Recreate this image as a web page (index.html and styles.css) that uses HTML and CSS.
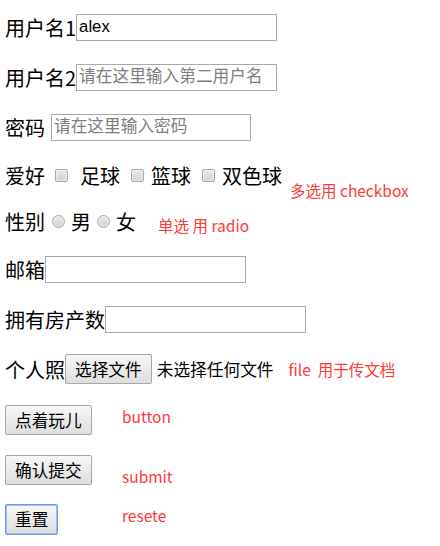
FILE: index.html
```html
<!DOCTYPE html>
<html lang="zh-CN">
<head>
  <meta charset="UTF-8">
  <title>表单</title>
  <link rel="stylesheet" href="styles.css">
</head>
<body>
  <form class="form">
    <div class="row">
      <label for="user1">用户名1</label>
      <input type="text" id="user1" value="alex">
    </div>

    <div class="row">
      <label for="user2">用户名2</label>
      <input type="text" id="user2" placeholder="请在这里输入第二用户名">
    </div>

    <div class="row">
      <label for="pwd">密码</label>
      <input type="password" id="pwd" class="spaced" placeholder="请在这里输入密码">
    </div>

    <div class="row choice">
      <span>爱好</span>
      <input type="checkbox" class="check first">
      <span>足球</span>
      <input type="checkbox" class="check">
      <span>篮球</span>
      <input type="checkbox" class="check">
      <span>双色球</span>
      <span class="note low">多选用 checkbox</span>
    </div>

    <div class="row choice">
      <span>性别</span>
      <input type="radio" name="sex" class="radio first">
      <span>男</span>
      <input type="radio" name="sex" class="radio">
      <span>女</span>
      <span class="note radio-note">单选 用 radio</span>
    </div>

    <div class="row">
      <label for="mail">邮箱</label>
      <input type="email" id="mail">
    </div>

    <div class="row">
      <label for="house">拥有房产数</label>
      <input type="number" id="house">
    </div>

    <div class="row">
      <span>个人照</span>
      <button type="button" class="btn">选择文件</button>
      <span class="file-name">未选择任何文件</span>
      <span class="note file-note">file&nbsp; 用于传文档</span>
    </div>

    <div class="row">
      <div class="btn-cell"><button type="button" class="btn">点着玩儿</button></div>
      <span class="note up">button</span>
    </div>

    <div class="row">
      <div class="btn-cell"><button type="submit" class="btn">确认提交</button></div>
      <span class="note down">submit</span>
    </div>

    <div class="row">
      <div class="btn-cell"><button type="reset" class="btn focused">重置</button></div>
      <span class="note up-more">resete</span>
    </div>
  </form>
</body>
</html>
```

FILE: styles.css
```css
body {
  margin: 0;
  padding: 12px 0 0 5px;
  font-family: "Noto Sans CJK SC", sans-serif;
  font-size: 20px;
  color: #000;
  background: #fff;
}

.row {
  display: flex;
  align-items: center;
  height: 30px;
  margin-bottom: 20px;
  white-space: nowrap;
}

.row.choice {
  height: 26px;
}

input[type="text"],
input[type="password"],
input[type="email"],
input[type="number"] {
  box-sizing: border-box;
  width: 201px;
  height: 27px;
  margin: 0;
  padding: 1px 2px;
  border: 1px solid #a9a9a9;
  font-family: "Liberation Sans", "Noto Sans CJK SC", sans-serif;
  font-size: 16.7px;
  color: #000;
  outline: none;
}

input[type="number"] {
  -moz-appearance: textfield;
}

input::-webkit-outer-spin-button,
input::-webkit-inner-spin-button {
  -webkit-appearance: none;
}

input::placeholder {
  font-family: "Noto Sans CJK SC", sans-serif;
  color: #7e7e7e;
}

.spaced {
  margin-left: 6px !important;
  width: 200px !important;
}

.check,
.radio {
  -webkit-appearance: none;
  appearance: none;
  box-sizing: border-box;
  width: 13px;
  height: 13px;
  margin: 0 7px 0 11px;
  border: 1px solid #a8a8a8;
  background: linear-gradient(#e9e9e9, #d2d2d2);
  box-shadow: inset 0 0 0 1px rgba(255, 255, 255, 0.5);
}

.check {
  border-radius: 2px;
}

.check.first {
  margin: 0 12px 0 10px;
}

.radio {
  border-radius: 50%;
  margin: 0 6px;
}

.radio.first {
  margin-left: 7px;
}

.btn {
  box-sizing: border-box;
  height: 30px;
  margin: 0;
  padding: 0 9px;
  border: 1px solid #a6a6a6;
  border-radius: 2px;
  background: linear-gradient(#f7f7f7, #dedede);
  font-family: "Noto Sans CJK SC", sans-serif;
  font-size: 16.7px;
  color: #000;
}

.btn.focused {
  height: 31px;
  border: 1px solid #6e9be6;
  box-shadow: inset 0 0 0 1px #9cbdf2;
}

.btn-cell {
  width: 117px;
}

.file-name {
  margin-left: 5px;
  font-size: 16.7px;
}

.note {
  color: #ff3838;
  font-size: 15.5px;
}

.note.low {
  margin: 30px 0 0 8px;
}

.radio-note {
  margin: 8px 0 0 22px;
}

.file-note {
  margin-left: 15px;
}

.note.up {
  margin-bottom: 6px;
}

.note.down {
  margin-top: 13px;
}

.note.up-more {
  margin-bottom: 9px;
}
```
